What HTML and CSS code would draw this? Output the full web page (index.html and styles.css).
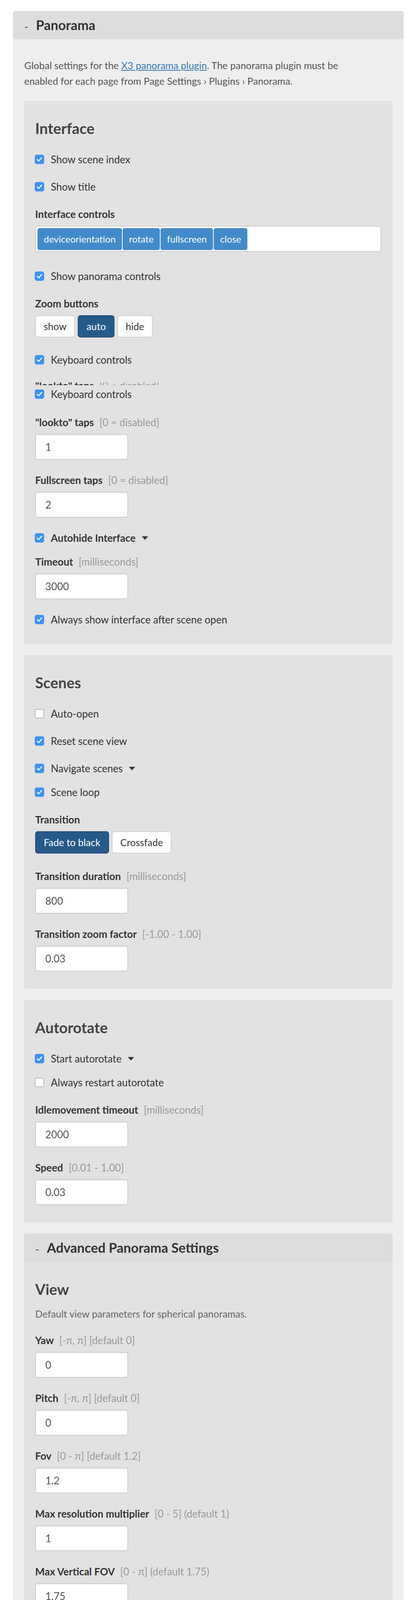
FILE: index.html
```html
<!DOCTYPE html>
<html lang="en">
<head>
<meta charset="utf-8">
<title>Panorama settings</title>
<link rel="stylesheet" href="styles.css">
</head>
<body>
<div class="panel">
  <div class="panel-head"><span class="toggle">-</span><span class="panel-title">Panorama</span></div>
  <div class="panel-body">
    <p class="intro">Global settings for the <a href="#">X3 panorama plugin</a>. The panorama plugin must be<br>enabled for each page from Page Settings › Plugins › Panorama.</p>

    <section class="card">
      <h3>Interface</h3>
      <div class="check"><span class="cb on"><svg viewBox="0 0 24 24"><path d="M6.5 12.5l3.6 3.8 7.4-8.6"/></svg></span>Show scene index</div>
      <div class="check"><span class="cb on"><svg viewBox="0 0 24 24"><path d="M6.5 12.5l3.6 3.8 7.4-8.6"/></svg></span>Show title</div>
      <div class="field field-tags">
        <div class="label">Interface controls</div>
        <div class="tagbox"><span class="tag">deviceorientation</span><span class="tag">rotate</span><span class="tag">fullscreen</span><span class="tag">close</span></div>
      </div>
      <div class="check"><span class="cb on"><svg viewBox="0 0 24 24"><path d="M6.5 12.5l3.6 3.8 7.4-8.6"/></svg></span>Show panorama controls</div>
      <div class="field field-btns">
        <div class="label">Zoom buttons</div>
        <div class="btns"><span class="btn">show</span><span class="btn active">auto</span><span class="btn">hide</span></div>
      </div>
      <div class="check"><span class="cb on"><svg viewBox="0 0 24 24"><path d="M6.5 12.5l3.6 3.8 7.4-8.6"/></svg></span>Keyboard controls</div>
      <div class="ghost" aria-hidden="true"><div class="label">"lookto" taps <span class="hint">[0 = disabled]</span></div></div>
      <div class="check check-after-ghost"><span class="cb on"><svg viewBox="0 0 24 24"><path d="M6.5 12.5l3.6 3.8 7.4-8.6"/></svg></span>Keyboard controls</div>
      <div class="field">
        <div class="label">"lookto" taps <span class="hint">[0 = disabled]</span></div>
        <div class="input">1</div>
      </div>
      <div class="field">
        <div class="label">Fullscreen taps <span class="hint">[0 = disabled]</span></div>
        <div class="input">2</div>
      </div>
      <div class="check check-sub strong"><span class="cb on"><svg viewBox="0 0 24 24"><path d="M6.5 12.5l3.6 3.8 7.4-8.6"/></svg></span>Autohide Interface<span class="caret"></span></div>
      <div class="field">
        <div class="label">Timeout <span class="hint">[milliseconds]</span></div>
        <div class="input">3000</div>
      </div>
      <div class="check"><span class="cb on"><svg viewBox="0 0 24 24"><path d="M6.5 12.5l3.6 3.8 7.4-8.6"/></svg></span>Always show interface after scene open</div>
    </section>

    <section class="card">
      <h3>Scenes</h3>
      <div class="check"><span class="cb"></span>Auto-open</div>
      <div class="check"><span class="cb on"><svg viewBox="0 0 24 24"><path d="M6.5 12.5l3.6 3.8 7.4-8.6"/></svg></span>Reset scene view</div>
      <div class="check check-sub"><span class="cb on"><svg viewBox="0 0 24 24"><path d="M6.5 12.5l3.6 3.8 7.4-8.6"/></svg></span>Navigate scenes<span class="caret"></span></div>
      <div class="check"><span class="cb on"><svg viewBox="0 0 24 24"><path d="M6.5 12.5l3.6 3.8 7.4-8.6"/></svg></span>Scene loop</div>
      <div class="field field-btns2">
        <div class="label">Transition</div>
        <div class="btns"><span class="btn active">Fade to black</span><span class="btn">Crossfade</span></div>
      </div>
      <div class="field">
        <div class="label">Transition duration <span class="hint">[milliseconds]</span></div>
        <div class="input">800</div>
      </div>
      <div class="field">
        <div class="label">Transition zoom factor <span class="hint">[-1.00 - 1.00]</span></div>
        <div class="input">0.03</div>
      </div>
    </section>

    <section class="card">
      <h3>Autorotate</h3>
      <div class="check check-sub"><span class="cb on"><svg viewBox="0 0 24 24"><path d="M6.5 12.5l3.6 3.8 7.4-8.6"/></svg></span>Start autorotate<span class="caret"></span></div>
      <div class="check"><span class="cb"></span>Always restart autorotate</div>
      <div class="field">
        <div class="label">Idlemovement timeout <span class="hint">[milliseconds]</span></div>
        <div class="input">2000</div>
      </div>
      <div class="field">
        <div class="label">Speed <span class="hint">[0.01 - 1.00]</span></div>
        <div class="input">0.03</div>
      </div>
    </section>

    <div class="subpanel">
      <div class="panel-head sub-head"><span class="toggle">-</span><span class="panel-title">Advanced Panorama Settings</span></div>
      <section class="card flush">
        <h3>View</h3>
        <p class="desc">Default view parameters for spherical panoramas.</p>
        <div class="field">
          <div class="label">Yaw <span class="hint">[-π, π] [default 0]</span></div>
          <div class="input">0</div>
        </div>
        <div class="field">
          <div class="label">Pitch <span class="hint">[-π, π] [default 0]</span></div>
          <div class="input">0</div>
        </div>
        <div class="field">
          <div class="label">Fov <span class="hint">[0 - π] [default 1.2]</span></div>
          <div class="input">1.2</div>
        </div>
        <div class="field">
          <div class="label">Max resolution multiplier <span class="hint">[0 - 5] (default 1)</span></div>
          <div class="input">1</div>
        </div>
        <div class="field">
          <div class="label">Max Vertical FOV <span class="hint">[0 - π] (default 1.75)</span></div>
          <div class="input">1.75</div>
        </div>
        <div class="field">
          <div class="label">Max Horizontal FOV <span class="hint">[0 - π] (0 = disabled, inherit from maxVFov)</span></div>
          <div class="input">0</div>
        </div>
      </section>

      <section class="card">
        <h3>Equirectangular</h3>
        <p class="desc">Options for single-file equirectangular format.</p>
        <div class="check"><span class="cb on"><svg viewBox="0 0 24 24"><path d="M6.5 12.5l3.6 3.8 7.4-8.6"/></svg></span>Create preview</div>
        <div class="check"><span class="cb on"><svg viewBox="0 0 24 24"><path d="M6.5 12.5l3.6 3.8 7.4-8.6"/></svg></span>Allow resize</div>
      </section>

      <section class="card">
        <h3>Flat</h3>
        <p class="desc">Default options for flat (non-spherical) gigapixel images.</p>
        <div class="field">
          <div class="label">Tile size</div>
          <div class="input">512</div>
        </div>
        <div class="field">
          <div class="label">Url format</div>
          <div class="input wide">l{z}/{y}/l{z}_{y}_{x}.jpg</div>
        </div>
        <div class="field">
          <div class="label">Zero padding</div>
          <div class="input">2</div>
        </div>
        <div class="field">
          <div class="label">Index start</div>
          <div class="input">1</div>
        </div>
      </section>
    </div>
  </div>
</div>
</body>
</html>
```

FILE: styles.css
```css
html, body {
  margin: 0;
  padding: 0;
  background: #ffffff;
}

body {
  font-family: Lato, "Noto Sans", "Liberation Sans", sans-serif;
  font-size: 26px;
  line-height: 40px;
  color: #333333;
}

.panel {
  margin: 28px 0 0 33px;
  width: 1000px;
  border-radius: 6px;
  background: #eeeeee;
}

.panel-head {
  height: 72px;
  display: flex;
  align-items: center;
  background: #dddddd;
  border-radius: 6px 6px 0 0;
  padding-left: 29px;
}

.toggle {
  font-size: 28px;
  color: #444444;
  width: 30px;
  position: relative;
  top: 4px;
}

.panel-title {
  font-size: 34px;
  font-weight: 700;
  color: #333333;
}

.panel-body {
  padding: 28px 28px 28px 28px;
}

.intro {
  margin: 19px 1px 31px 1px;
  font-size: 25px;
  color: #555555;
}

.intro a {
  color: #337ab7;
  text-decoration: underline;
}

.card {
  background: #e2e2e2;
  border-radius: 6px;
  padding: 29px 29px 12px 29px;
  margin-bottom: 29px;
}

.card.flush {
  border-radius: 0 0 6px 6px;
}

.subpanel {
  margin-bottom: 16px;
}

.subpanel .card:last-child {
  margin-bottom: 0;
}

.sub-head {
  border-radius: 6px 6px 0 0;
}

h3 {
  margin: 18px 0 20px 0;
  font-size: 38px;
  line-height: 46px;
  font-weight: 700;
  color: #444444;
}

h3 + .check {
  margin-top: 37px;
}

.desc {
  margin: 0 0 28px 0;
  font-size: 25px;
  color: #666666;
}

.desc + .check {
  margin-top: 30px;
}

.check {
  display: flex;
  align-items: center;
  height: 40px;
  margin-bottom: 30px;
  color: #333333;
}

.check-sub {
  margin-bottom: 21px;
}

.check.strong {
  font-weight: 700;
}

.check-after-ghost {
  margin-bottom: 32px;
}

.cb {
  flex: none;
  width: 24px;
  height: 24px;
  box-sizing: border-box;
  margin: 0 17px 0 -1px;
  border-radius: 5px;
  background: #ffffff;
  border: 2px solid #b8b8b8;
  display: flex;
}

.cb.on {
  background: #3d92f5;
  border-color: #3d92f5;
}

.cb svg {
  width: 24px;
  height: 24px;
  margin: -2px;
}

.cb svg path {
  fill: none;
  stroke: #ffffff;
  stroke-width: 2.6;
  stroke-linecap: round;
  stroke-linejoin: round;
}

.caret {
  width: 0;
  height: 0;
  margin-left: 16px;
  border-left: 8px solid transparent;
  border-right: 8px solid transparent;
  border-top: 9px solid #333333;
}

.ghost {
  height: 7px;
  overflow: hidden;
  margin: 38px 0 3px 0;
}

.ghost .label {
  margin-top: -12px;
}

.field {
  margin-bottom: 32px;
}

.field-tags {
  margin-bottom: 42px;
}

.field-btns {
  margin-bottom: 37px;
}

.field-btns2 {
  margin-bottom: 38px;
}

.label {
  font-weight: 700;
  color: #333333;
  margin-bottom: 10px;
  white-space: nowrap;
}

.hint {
  font-weight: 400;
  color: #999999;
  margin-left: 8px;
}

.input {
  width: 238px;
  height: 66px;
  box-sizing: border-box;
  border: 2px solid #cccccc;
  border-radius: 6px;
  background: #ffffff;
  box-shadow: inset 0 2px 2px rgba(0, 0, 0, 0.05);
  padding: 0 0 0 24px;
  line-height: 62px;
  color: #555555;
}

.input.wide {
  width: 886px;
}

.tagbox {
  height: 67px;
  box-sizing: border-box;
  border: 2px solid #cccccc;
  border-radius: 7px;
  background: #ffffff;
  padding: 4px 4px 3px 4px;
  display: flex;
  gap: 2px;
}

.tag {
  height: 56px;
  box-sizing: border-box;
  padding: 0 15px;
  background: #428bca;
  border: 1px solid #3a7dba;
  border-radius: 5px;
  color: #ffffff;
  font-size: 24px;
  line-height: 54px;
}

.btns {
  display: flex;
  gap: 7px;
}

.btn {
  height: 57px;
  box-sizing: border-box;
  padding: 0 20px;
  border: 2px solid #d2d2d2;
  border-radius: 7px;
  background: #ffffff;
  color: #333333;
  font-size: 25px;
  line-height: 53px;
}

.btn.active {
  background: #265a88;
  border-color: #1f4d76;
  color: #ffffff;
}
```
